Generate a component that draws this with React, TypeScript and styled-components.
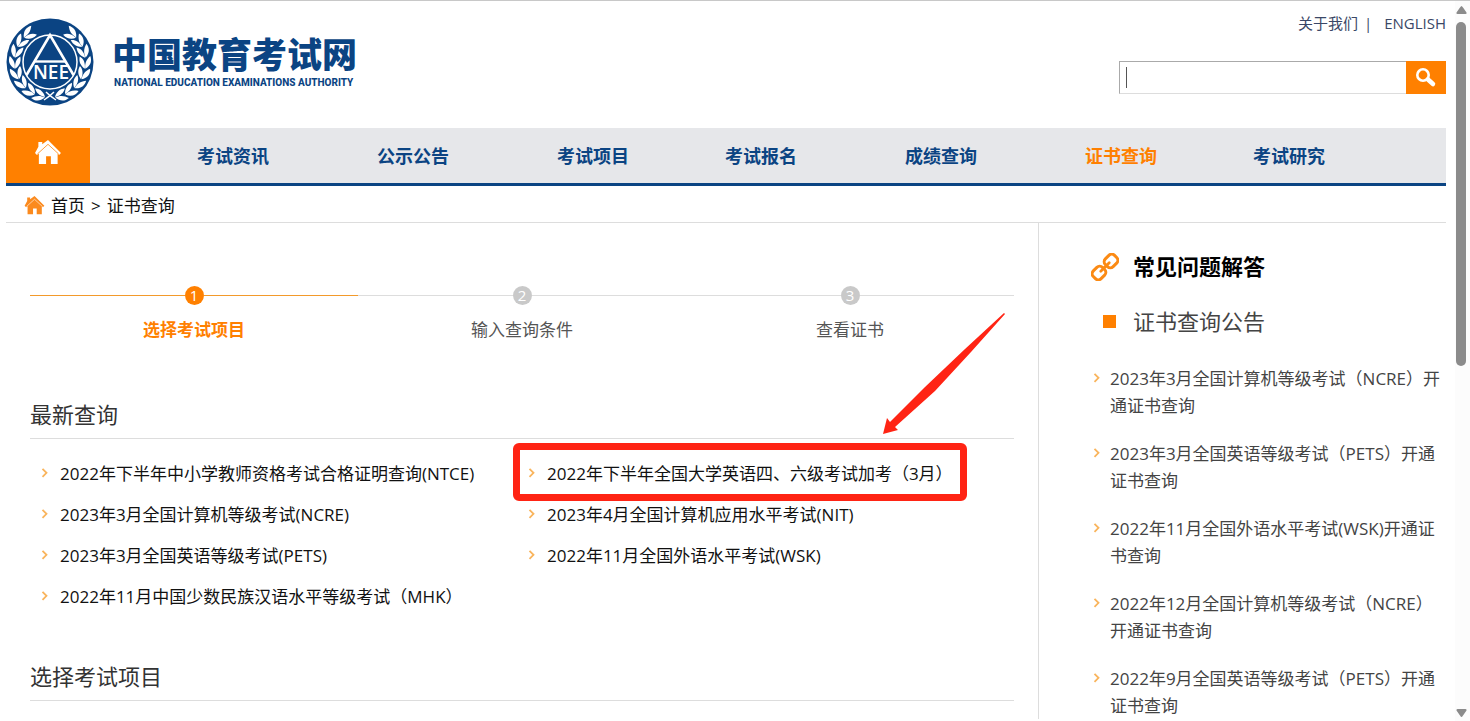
import React from "react";
import styled, { createGlobalStyle } from "styled-components";

const BLUE = "#0b4483";
const ORANGE = "#ff8000";
const RED = "#ff2414";

const GlobalStyle = createGlobalStyle`
  *, *::before, *::after { box-sizing: border-box; }
  body {
    margin: 0;
    background: #fff;
    color: #111;
    font-family: "Open Sans", "Noto Sans CJK SC", sans-serif;
    font-size: 17px;
    line-height: 27px;
  }
  a { color: inherit; text-decoration: none; }
  ul, ol { list-style: none; margin: 0; padding: 0; }
  h1, h2, h3, p { margin: 0; font-weight: 400; }
`;

const Shell = styled.div`
  display: flex;
  height: 100vh;
  border-top: 1px solid #c8c8c8;
`;

const Page = styled.div`
  flex: 1;
  min-width: 0;
  padding: 0 9px 0 6px;
  overflow-y: auto;
  scrollbar-width: none;
`;

const ScrollTrack = styled.div`
  display: flex;
  flex-direction: column;
  align-items: center;
  width: 15px;
  padding: 5px 3px 4px 0;
  background: #fcfcfc;
`;

const ScrollThumb = styled.div`
  flex: none;
  width: 10px;
  height: calc(50% - 12px);
  margin: 8px 0 auto;
  border-radius: 5px;
  background: #8b8b8b;
`;

const Header = styled.header`
  display: flex;
  justify-content: space-between;
  height: 127px;
`;

const Brand = styled.a`
  display: flex;
  align-items: flex-start;
  gap: 18px;
  padding-top: 17px;
  color: ${BLUE};
`;

const BrandText = styled.div`
  padding-top: 15px;
`;

const BrandName = styled.h1`
  font-family: "Noto Sans CJK SC", sans-serif;
  font-size: 35px;
  line-height: 40px;
  font-weight: 900;
`;

const BrandSub = styled.p`
  padding: 2px 0 0 2px;
  font-family: Roboto, "Liberation Sans", sans-serif;
  font-size: 10px;
  line-height: 16px;
  font-weight: 800;
`;

const Tools = styled.div`
  display: flex;
  flex-direction: column;
  align-items: flex-end;
  gap: 24px;
  padding-top: 9px;
`;

const TopLinks = styled.nav`
  display: flex;
  gap: 6px;
  font-size: 15px;
  color: #3a4766;
`;

const LastLink = styled.a`
  padding-left: 6px;
`;

const SearchForm = styled.form`
  position: relative;
  display: flex;
  height: 33px;
`;

const SearchInput = styled.input`
  width: 287px;
  padding: 0 8px;
  border: 1px solid #aaa;
  border-right: 0;
  border-bottom-color: #ddd;
  border-radius: 0;
  outline: 0;
  font: inherit;
`;

const Caret = styled.span`
  position: absolute;
  top: 6px;
  left: 7px;
  width: 1px;
  height: 21px;
  background: #555;
`;

const SearchButton = styled.button`
  display: flex;
  align-items: center;
  justify-content: center;
  width: 40px;
  padding: 0;
  border: 0;
  background: ${ORANGE};
`;

const NavBar = styled.nav`
  display: flex;
  height: 58px;
  border-bottom: 3px solid ${BLUE};
  background: #e6e7ea;
`;

const HomeTile = styled.a`
  display: flex;
  justify-content: center;
  width: 84px;
  padding-top: 12px;
  background: ${ORANGE};
`;

const NavList = styled.ul`
  flex: 1;
  display: grid;
  grid-template-columns: 7fr 8fr 7fr 7fr 8fr 7fr 7fr;
  margin: 0 73px 0 59px;
`;

const NavItem = styled.li<{ $active?: boolean }>`
  text-align: center;
  font-size: 18px;
  line-height: 57px;
  font-weight: 700;
  color: ${(p) => (p.$active ? ORANGE : BLUE)};
`;

const Crumbs = styled.nav`
  display: flex;
  align-items: center;
  gap: 6px;
  height: 37px;
  padding: 2px 0 0 18px;
  border-bottom: 1px solid #ddd;
`;

const Columns = styled.div`
  display: grid;
  grid-template-columns: 1fr 408px;
`;

const Main = styled.main`
  padding: 61px 24px 0;
`;

const Steps = styled.ol`
  display: grid;
  grid-template-columns: repeat(3, 1fr);
`;

const Step = styled.li<{ $active?: boolean }>`
  text-align: center;
  color: ${(p) => (p.$active ? ORANGE : "#555")};
  font-weight: ${(p) => (p.$active ? 700 : 400)};
`;

const StepTrack = styled.div<{ $active?: boolean }>`
  display: flex;
  align-items: center;
  height: 22px;
  margin-bottom: 10px;

  &::before,
  &::after {
    content: "";
    flex: 1;
    height: 1px;
    background: ${(p) => (p.$active ? "#f39a2b" : "#ddd")};
  }
`;

const StepDot = styled.span<{ $active?: boolean }>`
  width: 19px;
  height: 19px;
  border-radius: 50%;
  background: ${(p) => (p.$active ? ORANGE : "#c9c9c9")};
  color: #fff;
  font-size: 15px;
  line-height: 19px;
  font-weight: 400;
`;

const SectionTitle = styled.h2<{ $gap: number }>`
  margin-top: ${(p) => p.$gap}px;
  height: 40px;
  border-bottom: 1px solid #ddd;
  font-size: 22px;
  line-height: 30px;
  color: #333;
`;

const QueryList = styled.ul`
  display: grid;
  grid-template-columns: 487px 1fr;
  padding: 14px 0 0 11px;
`;

const QueryItem = styled.li`
  display: flex;
  align-items: center;
  gap: 11px;
  position: relative;
  height: 41px;
  white-space: nowrap;
`;

const Highlight = styled.span`
  position: absolute;
  top: -10px;
  left: -15px;
  width: 454px;
  height: 58px;
  border: 7px solid ${RED};
  border-radius: 6px;
  pointer-events: none;
`;

const Pointer = styled.svg`
  position: absolute;
  top: -140px;
  left: 355px;
  pointer-events: none;
`;

const Side = styled.aside`
  padding: 26px 0 0 52px;
  border-left: 1px solid #ddd;
`;

const SideHeading = styled.h2<{ $strong?: boolean }>`
  display: grid;
  grid-template-columns: 28px 1fr;
  column-gap: 14px;
  align-items: center;
  margin-bottom: ${(p) => (p.$strong ? 20 : 26)}px;
  font-size: 22px;
  line-height: 35px;
  font-weight: ${(p) => (p.$strong ? 700 : 400)};
  color: ${(p) => (p.$strong ? "#000" : "#444")};
`;

const Square = styled.span`
  width: 13px;
  height: 13px;
  margin-left: 12px;
  background: ${ORANGE};
`;

const NoticeItem = styled.li`
  display: flex;
  align-items: flex-start;
  gap: 9px;
  margin-bottom: 21px;
  padding-left: 2px;
  color: #444;

  &:last-child { margin-bottom: 0; }
`;

const NoticeMark = styled.span`
  display: flex;
  align-items: center;
  height: 27px;
`;

const Chevron = () => (
  <svg width="8" height="11" viewBox="0 0 8 11" fill="none" aria-hidden="true">
    <path d="M1.5 0.8 L5.500 4.800 L1.500 8.800" stroke="#f9b45c" strokeWidth="1.800" />
  </svg>
);

const House = ({ width, height, color, gap }: { width: number; height: number; color: string; gap: string }) => (
  <svg width={width} height={height} viewBox="0 0 28 26" aria-hidden="true">
    <path d="M4 7 V2 h4 v2.5 L14 0 L27.5 13.5 L25.5 15.5 L24 14 V25 H17 V17 H12 V25 H4.500 V14 L2.500 15.500 L0.500 13.500 Z" fill={color} />
    <path d="M3 14.500 L14 4.500 L25 14.500" fill="none" stroke={gap} strokeWidth="0.800" />
  </svg>
);

const Magnifier = () => (
  <svg width="22" height="22" viewBox="0 0 22 22" fill="none" stroke="#fff" aria-hidden="true">
    <circle cx="8" cy="8" r="5.700" strokeWidth="2.600" />
    <path d="M13 12.500 L18 17" strokeWidth="4.500" strokeLinecap="round" />
  </svg>
);

const Chain = () => (
  <svg width="28" height="28" viewBox="0 0 28 28" fill="none" stroke="#fb8a14" strokeWidth="3" aria-hidden="true">
    <g transform="rotate(-45 14 14)">
      <rect x="-1" y="8.500" width="13" height="11" rx="4" />
      <rect x="16" y="8.500" width="13" height="11" rx="4" />
      <path d="M8 14 H20" strokeWidth="2.800" strokeLinecap="round" />
    </g>
  </svg>
);

const LEAF_ANGLES = [-52, -34, -16, 2, 20, 38, 56, 73];

const Laurel = () => (
  <g fill="#fff">
    {LEAF_ANGLES.map((a) => (
      <g key={a} transform={`rotate(${-a} 44 44) translate(8.500 44)`}>
        <path d="M0 5.500 C-5.500 2 -6.500 -3 -4.500 -7.500 C-1 -4 1 0 0 5.500 Z" />
        <path d="M0.500 5.500 C0 0 2 -4.500 6 -6.500 C7 -1 4.500 3 0.500 5.500 Z" />
      </g>
    ))}
  </g>
);

const Emblem = () => (
  <svg width="88" height="88" viewBox="0 0 88 88" aria-hidden="true">
    <circle cx="44" cy="44" r="43.500" fill={BLUE} />
    <Laurel />
    <g transform="translate(88 0) scale(-1 1)">
      <Laurel />
    </g>
    <path d="M38 82 Q44 78 48 74 M50 82 Q44 78 40 74" fill="none" stroke="#fff" strokeWidth="1.500" />
    <circle cx="44" cy="44" r="27" fill={BLUE} stroke="#fff" strokeWidth="1.500" />
    <path d="M20.500 57 L44 17 L67.500 57" fill="none" stroke="#fff" strokeWidth="2.600" />
    <path d="M29 43.500 H59" stroke="#fff" strokeWidth="2.400" />
    <text x="45" y="60.500" textAnchor="middle" fill="#fff" fontFamily="Open Sans, sans-serif" fontWeight="600" fontSize="19">
      NEE
    </text>
  </svg>
);

const NAV = ["考试资讯", "公示公告", "考试项目", "考试报名", "成绩查询", "证书查询", "考试研究"];
const STEPS = ["选择考试项目", "输入查询条件", "查看证书"];
const QUERIES = [
  "2022年下半年中小学教师资格考试合格证明查询(NTCE)",
  "2022年下半年全国大学英语四、六级考试加考（3月）",
  "2023年3月全国计算机等级考试(NCRE)",
  "2023年4月全国计算机应用水平考试(NIT)",
  "2023年3月全国英语等级考试(PETS)",
  "2022年11月全国外语水平考试(WSK)",
  "2022年11月中国少数民族汉语水平等级考试（MHK）",
];
const NOTICES = [
  "2023年3月全国计算机等级考试（NCRE）开通证书查询",
  "2023年3月全国英语等级考试（PETS）开通证书查询",
  "2022年11月全国外语水平考试(WSK)开通证书查询",
  "2022年12月全国计算机等级考试（NCRE）开通证书查询",
  "2022年9月全国英语等级考试（PETS）开通证书查询",
];

export default function App() {
  return (
    <Shell>
      <GlobalStyle />
      <Page>
        <Header>
          <Brand href="#">
            <Emblem />
            <BrandText>
              <BrandName>中国教育考试网</BrandName>
              <BrandSub>NATIONAL EDUCATION EXAMINATIONS AUTHORITY</BrandSub>
            </BrandText>
          </Brand>
          <Tools>
            <TopLinks>
              <a href="#about">关于我们</a>
              <span>|</span>
              <LastLink href="#english">ENGLISH</LastLink>
            </TopLinks>
            <SearchForm onSubmit={(e) => e.preventDefault()}>
              <SearchInput type="text" aria-label="搜索" />
              <Caret />
              <SearchButton type="submit" aria-label="搜索">
                <Magnifier />
              </SearchButton>
            </SearchForm>
          </Tools>
        </Header>

        <NavBar>
          <HomeTile href="#" aria-label="首页">
            <House width={28} height={25} color="#fff" gap={ORANGE} />
          </HomeTile>
          <NavList>
            {NAV.map((label) => (
              <NavItem key={label} $active={label === "证书查询"}>
                <a href="#nav">{label}</a>
              </NavItem>
            ))}
          </NavList>
        </NavBar>

        <Crumbs>
          <House width={21} height={19} color="#fb8a1e" gap="#fff" />
          <a href="#">首页</a>
          <span>&gt;</span>
          <a href="#cert">证书查询</a>
        </Crumbs>

        <Columns>
          <Main>
            <Steps>
              {STEPS.map((label, i) => (
                <Step key={label} $active={i === 0}>
                  <StepTrack $active={i === 0}>
                    <StepDot $active={i === 0}>{i + 1}</StepDot>
                  </StepTrack>
                  {label}
                </Step>
              ))}
            </Steps>

            <SectionTitle $gap={56}>最新查询</SectionTitle>
            <QueryList>
              {QUERIES.map((label, i) => (
                <QueryItem key={label}>
                  <Chevron />
                  <a href="#query">{label}</a>
                  {i === 1 && (
                    <>
                      <Highlight />
                      <Pointer width="124" height="124" viewBox="0 0 124 124" aria-hidden="true">
                        <path
                          d="M121 0 L122 1 L88 39 L52 78 L12 114 L15 117 L0 121 L4 105 L7 109 L42 74 L82 36 Z"
                          fill={RED}
                        />
                      </Pointer>
                    </>
                  )}
                </QueryItem>
              ))}
            </QueryList>

            <SectionTitle $gap={44}>选择考试项目</SectionTitle>
          </Main>

          <Side>
            <SideHeading $strong>
              <Chain />
              常见问题解答
            </SideHeading>
            <SideHeading>
              <Square />
              证书查询公告
            </SideHeading>
            <ul>
              {NOTICES.map((label) => (
                <NoticeItem key={label}>
                  <NoticeMark>
                    <Chevron />
                  </NoticeMark>
                  <a href="#notice">{label}</a>
                </NoticeItem>
              ))}
            </ul>
          </Side>
        </Columns>
      </Page>

      <ScrollTrack aria-hidden="true">
        <svg width="11" height="8" viewBox="0 0 11 8">
          <path d="M5.500 0 Q6 0 7 1.500 L10.500 6.500 Q11 8 9.500 8 H1.500 Q0 8 0.500 6.500 L4 1.500 Q5 0 5.500 0 Z" fill="#8b8b8b" />
        </svg>
        <ScrollThumb />
        <svg width="11" height="8" viewBox="0 0 11 8">
          <path d="M5.500 8 Q5 8 4 6.500 L0.500 1.500 Q0 0 1.500 0 H9.500 Q11 0 10.500 1.500 L7 6.500 Q6 8 5.500 8 Z" fill="#8b8b8b" />
        </svg>
      </ScrollTrack>
    </Shell>
  );
}
